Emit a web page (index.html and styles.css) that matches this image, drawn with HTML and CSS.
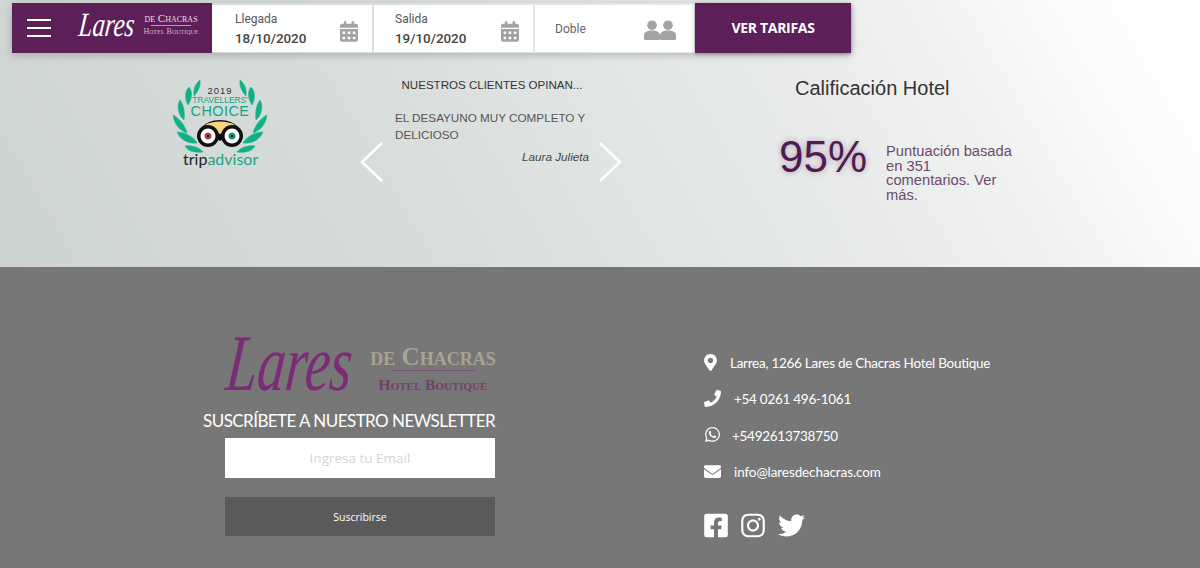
FILE: index.html
```html
<!DOCTYPE html>
<html lang="es">
<head>
<meta charset="utf-8">
<title>Lares de Chacras</title>
<link rel="stylesheet" href="styles.css">
</head>
<body>
<section class="hero">
  <div class="bar">
    <div class="brand">
      <div class="burger"><span></span><span></span><span></span></div>
      <div class="logo logo-small">
        <span class="script">Lares</span>
        <div class="logo-side"><span class="de">de Chacras</span><i class="rule"></i><span class="hb">Hotel Boutique</span></div>
      </div>
    </div>
    <div class="seg">
      <div class="seg-text"><span class="seg-label">Llegada</span><strong class="seg-date">18/10/2020</strong></div>
      <svg class="cal" viewBox="0 0 448 512"><path d="M0 464c0 26.5 21.5 48 48 48h352c26.5 0 48-21.5 48-48V192H0v272zm320-196c0-6.6 5.4-12 12-12h40c6.6 0 12 5.4 12 12v40c0 6.6-5.4 12-12 12h-40c-6.6 0-12-5.4-12-12v-40zm0 128c0-6.6 5.4-12 12-12h40c6.6 0 12 5.4 12 12v40c0 6.6-5.4 12-12 12h-40c-6.6 0-12-5.4-12-12v-40zM192 268c0-6.6 5.4-12 12-12h40c6.6 0 12 5.4 12 12v40c0 6.6-5.4 12-12 12h-40c-6.6 0-12-5.4-12-12v-40zm0 128c0-6.6 5.4-12 12-12h40c6.6 0 12 5.4 12 12v40c0 6.6-5.4 12-12 12h-40c-6.6 0-12-5.4-12-12v-40zM64 268c0-6.6 5.4-12 12-12h40c6.6 0 12 5.4 12 12v40c0 6.6-5.4 12-12 12H76c-6.6 0-12-5.4-12-12v-40zm0 128c0-6.6 5.4-12 12-12h40c6.6 0 12 5.4 12 12v40c0 6.6-5.4 12-12 12H76c-6.6 0-12-5.4-12-12v-40zM400 64h-48V16c0-8.8-7.2-16-16-16h-32c-8.8 0-16 7.2-16 16v48H160V16c0-8.8-7.2-16-16-16h-32c-8.8 0-16 7.2-16 16v48H48C21.5 64 0 85.5 0 112v48h448v-48c0-26.5-21.5-48-48-48z"/></svg>
    </div>
    <div class="seg">
      <div class="seg-text"><span class="seg-label">Salida</span><strong class="seg-date">19/10/2020</strong></div>
      <svg class="cal" viewBox="0 0 448 512"><path d="M0 464c0 26.5 21.5 48 48 48h352c26.5 0 48-21.5 48-48V192H0v272zm320-196c0-6.6 5.4-12 12-12h40c6.6 0 12 5.4 12 12v40c0 6.6-5.4 12-12 12h-40c-6.6 0-12-5.4-12-12v-40zm0 128c0-6.6 5.4-12 12-12h40c6.6 0 12 5.4 12 12v40c0 6.6-5.4 12-12 12h-40c-6.6 0-12-5.4-12-12v-40zM192 268c0-6.6 5.4-12 12-12h40c6.6 0 12 5.4 12 12v40c0 6.6-5.4 12-12 12h-40c-6.6 0-12-5.4-12-12v-40zm0 128c0-6.6 5.4-12 12-12h40c6.6 0 12 5.4 12 12v40c0 6.6-5.4 12-12 12h-40c-6.6 0-12-5.4-12-12v-40zM64 268c0-6.6 5.4-12 12-12h40c6.6 0 12 5.4 12 12v40c0 6.6-5.4 12-12 12H76c-6.6 0-12-5.4-12-12v-40zm0 128c0-6.6 5.4-12 12-12h40c6.6 0 12 5.4 12 12v40c0 6.6-5.4 12-12 12H76c-6.6 0-12-5.4-12-12v-40zM400 64h-48V16c0-8.8-7.2-16-16-16h-32c-8.8 0-16 7.2-16 16v48H160V16c0-8.8-7.2-16-16-16h-32c-8.8 0-16 7.2-16 16v48H48C21.5 64 0 85.5 0 112v48h448v-48c0-26.5-21.5-48-48-48z"/></svg>
    </div>
    <div class="seg seg-room">
      <span class="seg-room-label">Doble</span>
      <svg class="people" viewBox="0 0 32 20"><circle cx="8" cy="5.2" r="4.8"/><path d="M0 19v-3.5C0 12 3 10.5 8 10.5s8 1.5 8 5V19a1 1 0 0 1-1 1H1a1 1 0 0 1-1-1z"/><circle cx="24" cy="5.2" r="4.8"/><path d="M16 19v-3.5c0-3.500 3-5 8-5s8 1.500 8 5V19a1 1 0 0 1-1 1H17a1 1 0 0 1-1-1z"/></svg>
    </div>
    <a class="cta">VER TARIFAS</a>
  </div>

  <div class="hero-row">
    <svg class="badge" viewBox="0 0 96 92">
      <g class="leaves">
        <path d="M28 2c1 6-2 12-6 16-1-6 1-12 6-16z"/>
        <path d="M17 9c4 5 3 12-1 18-3-5-4-13 1-18z"/>
        <path d="M8 22c4 5 5 13 4 20-5-4-8-13-4-20z"/>
        <path d="M1 37c6 3 12 10 14 18-7-2-13-9-14-18z"/>
        <path d="M5 54c7 0 16 4 20 11-8 1-17-3-20-11z"/>
        <path d="M13 68c6-1 14 1 18 6-6 1-15 0-18-6z"/>
        <path d="M68 2c-1 6 2 12 6 16 1-6-1-12-6-16z"/>
        <path d="M79 9c-4 5-3 12 1 18 3-5 4-13-1-18z"/>
        <path d="M88 22c-4 5-5 13-4 20 5-4 8-13 4-20z"/>
        <path d="M95 37c-6 3-12 10-14 18 7-2 13-9 14-18z"/>
        <path d="M91 54c-7 0-16 4-20 11 8 1 17-3 20-11z"/>
        <path d="M83 68c-6-1-14 1-18 6 6 1 15 0 18-6z"/>
      </g>
      <text class="b-year" x="48" y="16" text-anchor="middle">2019</text>
      <text class="b-trav" x="48" y="24.500" text-anchor="middle">TRAVELLERS'</text>
      <text class="b-choice" x="48" y="38" text-anchor="middle">CHOICE</text>
      <path class="eye" d="M28 51c5-6 12-9 20-9s15 3 20 9l-20 12z"/>
      <path class="owl-top" d="M33 47c4-2 9-3.500 15-3.500s11 1.500 15 3.500l-15 9z"/>
      <circle class="eye" cx="36" cy="58" r="11"/><circle class="eye" cx="60" cy="58" r="11"/>
      <circle class="eye-in" cx="36" cy="58" r="7.500"/><circle class="eye-in" cx="60" cy="58" r="7.500"/>
      <circle class="pupil-l" cx="36" cy="58" r="3.500"/><circle class="pupil-r" cx="60" cy="58" r="3.500"/>
      <circle class="eye" cx="36" cy="58" r="1.500"/><circle class="eye" cx="60" cy="58" r="1.500"/>
      <text class="b-trip" x="11" y="87">trip<tspan class="b-adv">advisor</tspan></text>
    </svg>

    <div class="reviews">
      <svg class="chev chev-l" viewBox="0 0 24 40"><path d="M22 1L2 20l20 19"/></svg>
      <svg class="chev chev-r" viewBox="0 0 24 40"><path d="M2 1l20 19L2 39"/></svg>
      <h3 class="rev-title">NUESTROS CLIENTES OPINAN...</h3>
      <p class="rev-text">EL DESAYUNO MUY COMPLETO Y DELICIOSO</p>
      <p class="rev-author">Laura Julieta</p>
    </div>

    <div class="rating">
      <h2 class="rating-title">Calificación Hotel</h2>
      <div class="rating-row">
        <span class="score">95%</span>
        <p class="score-note">Puntuación basada en 351 comentarios. Ver más.</p>
      </div>
    </div>
  </div>
</section>

<footer class="footer">
  <div class="news">
    <div class="logo logo-big">
      <span class="script">Lares</span>
      <div class="logo-side"><span class="de">de Chacras</span><i class="rule"></i><span class="hb">Hotel Boutique</span></div>
    </div>
    <h4 class="news-title">SUSCRÍBETE A NUESTRO NEWSLETTER</h4>
    <div class="news-form">
      <div class="news-input">Ingresa tu Email</div>
      <div class="news-btn">Suscribirse</div>
    </div>
  </div>
  <div class="contact">
    <div class="c-row">
      <span class="c-icon"><svg viewBox="0 0 384 512"><path d="M172.268 501.67C26.97 291.031 0 261.628 0 192 0 85.961 85.961 0 192 0s192 85.961 192 192c0 69.628-26.97 99.031-172.268 309.67-9.535 13.774-29.93 13.773-39.464 0zM192 272c44.183 0 80-35.817 80-80s-35.817-80-80-80-80 35.817-80 80 35.817 80 80 80z"/></svg></span>
      <span class="c-text c-t1">Larrea, 1266 Lares de Chacras Hotel Boutique</span>
    </div>
    <div class="c-row">
      <span class="c-icon"><svg viewBox="0 0 512 512"><path d="M493.4 24.6l-104-24c-11.3-2.6-22.9 3.3-27.5 13.9l-48 112c-4.2 9.8-1.4 21.3 6.9 28l60.6 49.6c-36 76.7-98.9 140.5-177.2 177.2l-49.6-60.6c-6.8-8.3-18.2-11.1-28-6.9l-112 48C3.9 366.5-2 378.1.6 389.4l24 104C27.1 504.2 36.7 512 48 512c256.1 0 464-207.5 464-464 0-11.2-7.7-20.9-18.6-23.4z"/></svg></span>
      <span class="c-text c-t2">+54 0261 496-1061</span>
    </div>
    <div class="c-row">
      <span class="c-icon"><svg viewBox="0 0 448 512"><path d="M380.9 97.1C339 55.1 283.2 32 223.9 32c-122.4 0-222 99.6-222 222 0 39.1 10.2 77.3 29.6 111L0 480l117.7-30.9c32.4 17.7 68.9 27 106.1 27h.1c122.3 0 224.1-99.6 224.1-222 0-59.3-25.2-115-67.1-157zm-157 341.6c-33.2 0-65.7-8.9-94-25.7l-6.7-4-69.8 18.3L72 359.2l-4.4-7c-18.5-29.4-28.2-63.3-28.2-98.2 0-101.7 82.8-184.5 184.6-184.5 49.3 0 95.6 19.2 130.4 54.1 34.8 34.9 56.2 81.2 56.1 130.5 0 101.8-84.9 184.6-186.6 184.6zm101.2-138.2c-5.5-2.8-32.8-16.2-37.9-18-5.1-1.9-8.8-2.8-12.5 2.8-3.7 5.6-14.3 18-17.6 21.8-3.2 3.7-6.5 4.2-12 1.4-32.6-16.3-54-29.1-75.5-66-5.7-9.8 5.7-9.1 16.3-30.3 1.8-3.7.9-6.9-.5-9.7-1.4-2.8-12.5-30.1-17.1-41.2-4.5-10.8-9.1-9.3-12.5-9.5-3.2-.2-6.9-.2-10.6-.2-3.7 0-9.7 1.4-14.8 6.9-5.1 5.6-19.4 19-19.4 46.3 0 27.3 19.9 53.7 22.6 57.4 2.8 3.7 39.1 59.7 94.8 83.8 35.2 15.2 49 16.5 66.6 13.9 10.7-1.6 32.8-13.4 37.4-26.4 4.6-13 4.6-24.1 3.2-26.4-1.3-2.5-5-3.9-10.5-6.6z"/></svg></span>
      <span class="c-text c-t3">+5492613738750</span>
    </div>
    <div class="c-row">
      <span class="c-icon"><svg viewBox="0 0 512 512"><path d="M502.3 190.8c3.9-3.1 9.7-.2 9.700 4.700V400c0 26.5-21.5 48-48 48H48c-26.5 0-48-21.5-48-48V195.6c0-5 5.700-7.800 9.700-4.700 22.400 17.400 52.100 39.500 154.100 113.600 21.100 15.400 56.700 47.800 92.200 47.600 35.700.3 72-32.800 92.300-47.600 102-74.100 131.600-96.300 154-113.700zM256 320c23.200.4 56.600-29.200 73.400-41.400 132.700-96.300 142.800-104.700 173.400-128.700 5.800-4.500 9.200-11.500 9.200-18.900v-19c0-26.500-21.500-48-48-48H48C21.500 64 0 85.500 0 112v19c0 7.400 3.400 14.300 9.200 18.900 30.600 23.900 40.700 32.400 173.400 128.700 16.800 12.200 50.200 41.800 73.400 41.400z"/></svg></span>
      <span class="c-text c-t4">info@laresdechacras.com</span>
    </div>
    <div class="social">
      <svg class="so-f" viewBox="0 0 448 512"><path d="M400 32H48A48 48 0 0 0 0 80v352a48 48 0 0 0 48 48h137.25V327.69h-63V256h63v-54.64c0-62.15 37-96.48 93.67-96.48 27.14 0 55.52 4.84 55.52 4.84v61h-31.27c-30.81 0-40.42 19.12-40.42 38.73V256h68.78l-11 71.69h-57.78V480H400a48 48 0 0 0 48-48V80a48 48 0 0 0-48-48z"/></svg>
      <svg class="so-i" viewBox="0 0 448 512"><path d="M224.1 141c-63.6 0-114.9 51.3-114.9 114.9s51.3 114.9 114.9 114.9S339 319.5 339 255.9 287.7 141 224.1 141zm0 189.6c-41.1 0-74.7-33.5-74.7-74.7s33.5-74.7 74.7-74.7 74.7 33.5 74.7 74.7-33.6 74.7-74.7 74.7zm146.4-194.3c0 14.9-12 26.8-26.8 26.8-14.9 0-26.8-12-26.8-26.8s12-26.8 26.8-26.8 26.8 12 26.8 26.8zm76.1 27.2c-1.7-35.9-9.9-67.7-36.2-93.9-26.2-26.2-58-34.4-93.9-36.2-37-2.1-147.9-2.1-184.9 0-35.8 1.7-67.6 9.9-93.9 36.1s-34.4 58-36.2 93.9c-2.1 37-2.1 147.9 0 184.9 1.7 35.9 9.9 67.7 36.2 93.9s58 34.4 93.9 36.2c37 2.1 147.9 2.1 184.9 0 35.9-1.7 67.7-9.9 93.9-36.2 26.2-26.2 34.4-58 36.2-93.9 2.1-37 2.1-147.8 0-184.8zM398.8 388c-7.8 19.6-22.9 34.7-42.6 42.6-29.5 11.7-99.5 9-132.1 9s-102.7 2.6-132.1-9c-19.6-7.8-34.7-22.9-42.6-42.6-11.7-29.5-9-99.5-9-132.1s-2.6-102.7 9-132.1c7.8-19.6 22.9-34.7 42.6-42.6 29.5-11.7 99.5-9 132.1-9s102.7-2.6 132.1 9c19.6 7.8 34.7 22.9 42.6 42.6 11.7 29.5 9 99.5 9 132.1s2.7 102.7-9 132.1z"/></svg>
      <svg class="so-t" viewBox="0 0 512 512"><path d="M459.37 151.716c.325 4.548.325 9.097.325 13.645 0 138.72-105.583 298.558-298.558 298.558-59.452 0-114.68-17.219-161.137-47.106 8.447.974 16.568 1.299 25.34 1.299 49.055 0 94.213-16.568 130.274-44.832-46.132-.975-84.792-31.188-98.112-72.772 6.498.974 12.995 1.624 19.818 1.624 9.421 0 18.843-1.3 27.614-3.573-48.081-9.747-84.143-51.98-84.143-102.985v-1.299c13.969 7.797 30.214 12.67 47.431 13.319-28.264-18.843-46.781-51.005-46.781-87.391 0-19.492 5.197-37.36 14.294-52.954 51.655 63.675 129.3 105.258 216.365 109.807-1.624-7.797-2.599-15.918-2.599-24.04 0-57.828 46.782-104.934 104.934-104.934 30.213 0 57.502 12.67 76.67 33.137 23.715-4.548 46.456-13.32 66.599-25.34-7.798 24.366-24.366 44.833-46.132 57.827 21.117-2.273 41.584-8.122 60.426-16.243-14.292 20.791-32.161 39.308-52.628 54.253z"/></svg>
    </div>
  </div>
</footer>
</body>
</html>
```

FILE: styles.css
```css
* { box-sizing: border-box; }
html, body { margin: 0; padding: 0; }
body { width: 1200px; height: 568px; overflow: hidden; font-family: "Liberation Sans", Arial, sans-serif; }
h2, h3, h4, p { margin: 0; font-weight: 400; }

.hero { height: 267px; padding: 3px 0 0 12px; background: linear-gradient(60deg, #ccd4d2 0%, #d6dcda 30%, #e9ebeb 66%, #f0f1f1 78%, #fcfcfc 90%, #ffffff 100%); }

.bar { display: flex; width: 839px; height: 50px; box-shadow: 0 2px 8px rgba(0, 0, 0, .22); }
.brand { width: 200px; display: flex; align-items: center; padding-left: 15px; background: #5c1f58; }
.burger { width: 24px; display: flex; flex-direction: column; gap: 6px; }
.burger span { height: 2px; background: #fff; }
.seg { width: 160px; margin: 2px 2px 1px 0; padding: 0 14px 0 23px; display: flex; align-items: center; justify-content: space-between; background: #fff; }
.seg + .seg { width: 159px; padding-left: 21px; }
.seg-text { display: flex; flex-direction: column; margin-top: 2px; }
.seg-label { font: 400 12px/14px Roboto, sans-serif; color: #555; }
.seg-date { font: 500 13.400px/17px Roboto, sans-serif; color: #444; margin-top: 4px; }
.cal { width: 18px; height: 21px; margin-top: 5px; fill: #a3a3a3; }
.seg + .seg.seg-room { padding: 0 18px 0 20px; width: 159px; margin-right: 1px; }
.seg-room-label { font: 400 12px/14px Roboto, sans-serif; color: #666; }
.people { width: 32px; height: 20px; margin-top: 3px; fill: #a3a3a3; }
.cta { width: 156px; display: flex; align-items: center; justify-content: center; padding-bottom: 2px; background: #5c1f58; color: #fff; font: 700 14px "Open Sans", sans-serif; letter-spacing: -.3px; box-shadow: 0 1px 4px rgba(0, 0, 0, .35); }

.logo { display: flex; align-items: center; }
.script { display: block; font-family: "Liberation Serif", serif; font-style: italic; transform-origin: left center; white-space: nowrap; }
.logo-side { display: flex; flex-direction: column; align-items: center; font-family: "Liberation Serif", serif; font-variant: small-caps; }
.logo-small { margin-left: 28px; color: #fff; }
.logo-small .script { font-size: 34px; line-height: 34px; width: 64px; margin-top: -6px; transform: scaleX(.73) skewX(-8deg); }
.logo-small .logo-side { width: 56px; margin-top: -8px; }
.logo-small .de { font-size: 11px; line-height: 12px; white-space: nowrap; color: #e8dfe7; }
.logo-small .rule { width: 40px; height: 1px; margin: 1px 0; background: #b79ab5; }
.logo-small .hb { font-size: 8px; line-height: 9px; white-space: nowrap; color: #cdb9cb; }

.hero-row { display: flex; margin-top: 25px; padding-left: 160px; }
.badge { width: 96px; height: 92px; flex: none; }
.leaves { fill: #12b088; stroke: #12b088; stroke-width: .5; }
.b-year { font: 400 9.500px "Liberation Sans", sans-serif; letter-spacing: 1px; fill: #333; }
.b-trav { font: 400 8.400px "Liberation Sans", sans-serif; fill: #12a585; }
.b-choice { font: 400 14.500px "Liberation Sans", sans-serif; letter-spacing: .4px; fill: #12a585; }
.owl-top { fill: #f6d57c; }
.eye { fill: #111; }
.eye-in { fill: #fff; }
.pupil-l { fill: #b9475f; }
.pupil-r { fill: #12a585; }
.b-trip { font: 400 16px Lato, sans-serif; fill: #222; }
.b-adv { fill: #1fa384; }

.reviews { position: relative; width: 262px; height: 110px; margin-left: 92px; padding: 0 33px 0 35px; }
.chev { position: absolute; top: 64px; width: 24px; height: 40px; fill: none; stroke: #fff; stroke-width: 2.500; }
.chev-l { left: 0; }
.chev-r { right: 0; }
.rev-title { font-size: 11.550px; line-height: 14px; text-align: center; color: #333; white-space: nowrap; }
.rev-text { font-size: 11.700px; line-height: 17px; margin-top: 17px; color: #555; }
.rev-author { font-size: 11.700px; line-height: 14px; margin-top: 7px; text-align: right; font-style: italic; color: #444; }

.rating { width: 240px; margin: -1px 0 0 157px; }
.rating-title { font-size: 20px; line-height: 22px; padding-left: 16px; color: #333; }
.rating-row { display: flex; align-items: flex-start; margin-top: 33px; }
.score { font-size: 44px; line-height: 50px; color: #501c50; text-shadow: 0 0 6px rgba(92, 31, 88, .4); }
.score-note { width: 130px; margin: 12px 0 0 19px; font-size: 14.700px; line-height: 14.500px; color: #6d4a6c; }

.footer { height: 301px; padding: 66px 0 0 203px; display: flex; background: #777; color: #fff; }
.news { width: 292px; }
.logo-big { margin-left: 24px; height: 60px; align-items: flex-start; }
.logo-big .script { font-size: 80px; line-height: 60px; width: 144px; color: #7b2c74; transform: scaleX(.7) skewX(-8deg); }
.logo-big .logo-side { width: 124px; margin-top: 12px; }
.logo-big .de { font-size: 25px; line-height: 24px; color: #a8a38f; white-space: nowrap; font-weight: 700; }
.logo-big .rule { width: 84px; height: 1px; margin: 1px 0 6px; background: #7b4d78; }
.logo-big .hb { font-size: 15.500px; line-height: 16px; color: #70406e; white-space: nowrap; font-weight: 700; }
.news-title { margin-top: 18px; font: 400 17px/20px Lato, sans-serif; letter-spacing: -.55px; white-space: nowrap; }
.news-form { margin: 7px 0 0 22px; }
.news-input { height: 40px; display: flex; align-items: center; justify-content: center; background: #fff; color: #d6d6d6; font: 400 13.500px "Open Sans", sans-serif; }
.news-btn { height: 39px; margin-top: 19px; display: flex; align-items: center; justify-content: center; background: #5a5a5a; font: 400 10.500px "Open Sans", sans-serif; }

.contact { margin: 12px 0 0 209px; display: flex; flex-direction: column; }
.c-row { height: 36.300px; display: flex; align-items: center; }
.c-icon { width: 16px; height: 18px; display: flex; align-items: center; justify-content: flex-start; margin-top: -2px; }
.c-icon svg { width: 17px; height: 17px; fill: #fff; flex: none; }
.c-row:first-child .c-icon svg { width: 13px; height: 17px; }
.c-text { font: 400 13.500px/18px Lato, sans-serif; letter-spacing: -.27px; white-space: nowrap; }
.c-t1 { margin-left: 10px; }
.c-t2 { margin-left: 14px; }
.c-t3 { margin-left: 12px; }
.c-t4 { margin-left: 14px; letter-spacing: -.1px; }
.social { display: flex; align-items: center; gap: 13px; margin-top: 22px; }
.social svg { fill: #fff; flex: none; }
.so-f, .so-i { width: 24px; height: 27px; }
.so-t { width: 27px; height: 27px; }
```
